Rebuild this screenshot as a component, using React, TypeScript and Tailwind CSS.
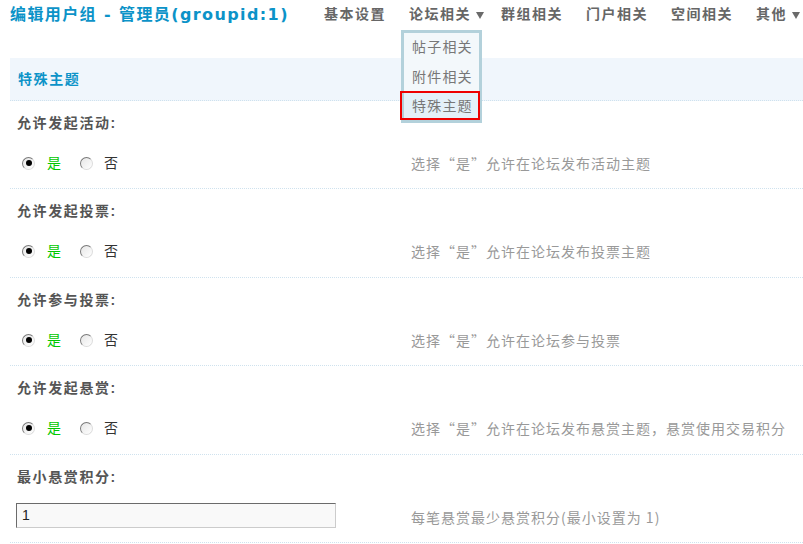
import React from 'react';

const CJK = '"DejaVu Sans", "Noto Sans CJK SC", sans-serif';
const BODY = '"Liberation Sans", "Noto Sans CJK SC", sans-serif';
const TIP = '"Noto Sans CJK SC", "Liberation Sans", sans-serif';

interface Setting {
  label: string;
  tip: string;
  input?: string;
  tall?: boolean;
}

const settings: Setting[] = [
  { label: '允许发起活动:', tip: '选择“是”允许在论坛发布活动主题' },
  { label: '允许发起投票:', tip: '选择“是”允许在论坛发布投票主题', tall: true },
  { label: '允许参与投票:', tip: '选择“是”允许在论坛参与投票' },
  { label: '允许发起悬赏:', tip: '选择“是”允许在论坛发布悬赏主题，悬赏使用交易积分', tall: true },
  { label: '最小悬赏积分:', tip: '每笔悬赏最少悬赏积分(最小设置为 1)', input: '1' },
];

const navItems = [
  { name: '基本设置', ml: 'ml-0' },
  { name: '论坛相关', ml: 'ml-[23px]', caret: true },
  { name: '群组相关', ml: 'ml-[17px]' },
  { name: '门户相关', ml: 'ml-[23px]' },
  { name: '空间相关', ml: 'ml-[23px]' },
  { name: '其他', ml: 'ml-[23px]', caret: true },
];

/**
 * Radio dot drawn as CSS circle
 */
const Radio: React.FC<{ checked?: boolean }> = ({ checked }) => (
  <span className="w-[13px] h-[13px] rounded-full border border-t-[#7a7a7a] border-l-[#7a7a7a] border-b-[#dcdcdc] border-r-[#dcdcdc] bg-gradient-to-br from-[#e6e6e6] to-white flex items-center justify-center">
    {checked && <span className="w-[6px] h-[6px] rounded-full bg-black" />}
  </span>
);

const Caret = () => (
  <svg width="8" height="7" viewBox="0 0 8 7" className="ml-[5px] mt-[1px]">
    <polygon points="0,0 8,0 4,7" fill="#6a6a6a" />
  </svg>
);

const SettingGroup: React.FC<{ item: Setting }> = ({ item }) => (
  <div className={`border-b border-dotted border-[#cfe2ee] ${item.tall ? 'h-[89px]' : 'h-[88px]'}`}>
    <div className="h-[44px] flex items-center pl-[7px] font-bold text-[#555] text-[14px] tracking-[1.6px]">
      {item.label}
    </div>
    <div className="flex items-start pt-[9px]">
      {item.input ? (
        <div className="w-[395px] pl-[6px] -mt-[5px]">
          <div className="w-[320px] h-[25px] bg-[#f9f9f9] border border-t-[#6b6b6b] border-l-[#6b6b6b] border-b-[#cccccc] border-r-[#cccccc] flex items-center pl-[5px] text-[14px] text-[#222]">
            {item.input}
          </div>
        </div>
      ) : (
        <div className="w-[395px] h-[18px] flex items-center pl-[12px] text-[14px]">
          <Radio checked />
          <span className="ml-[12px] text-[#00c800]">是</span>
          <span className="ml-[19px]"><Radio /></span>
          <span className="ml-[11px] text-[#333]">否</span>
        </div>
      )}
      <div className="h-[18px] flex items-center pl-[6px] text-[14px] text-[#999] tracking-[1px]" style={{ fontFamily: TIP }}>
        {item.tip}
      </div>
    </div>
  </div>
);

export default function App() {
  return (
    <div className="w-[803px] h-[544px] bg-white overflow-hidden" style={{ fontFamily: BODY }} lang="zh-CN">
      {/* Header */}
      <div className="h-[30px] flex items-center pl-[10px] pb-[1px]">
        <div className="font-bold text-[16px] text-[#0c93c8] tracking-[1.4px] w-[314px]" style={{ fontFamily: CJK }}>
          编辑用户组 - 管理员(groupid:1)
        </div>
        <div className="flex items-center">
          {navItems.map((n) => (
            <div key={n.name} className={`${n.ml} relative flex items-center font-bold text-[14px] text-[#666] tracking-[1.5px]`}>
              <span>{n.name}</span>
              {n.caret && <Caret />}
              {n.name === '论坛相关' && (
                <div className="absolute left-[-8px] top-[26px] w-[81px] border-[3px] border-[#b3d1db] bg-[#f3f8fb] font-normal text-[#777] tracking-[1.2px] z-10">
                  <div className="h-[29px] flex items-center pl-[8px]">帖子相关</div>
                  <div className="h-[30px] flex items-center pl-[8px]">附件相关</div>
                  <div className="h-[28px] flex items-center pl-[8px] bg-[#e4f0f8] relative">
                    特殊主题
                    <div className="absolute left-[-4px] right-[-1px] top-[-1px] bottom-[0px] border-2 border-[#ee0000]" />
                  </div>
                </div>
              )}
            </div>
          ))}
        </div>
      </div>

      <div className="ml-[10px]">
        <div className="h-[28px]" />
        {/* Section band */}
        <div className="h-[43px] bg-[#f0f6fc] border-b border-dotted border-[#cfe2ee] flex items-center pl-[8px] font-bold text-[14px] text-[#0c93c8] tracking-[1.6px]">
          特殊主题
        </div>
        {settings.map((s) => (
          <SettingGroup key={s.label} item={s} />
        ))}
      </div>
    </div>
  );
}
